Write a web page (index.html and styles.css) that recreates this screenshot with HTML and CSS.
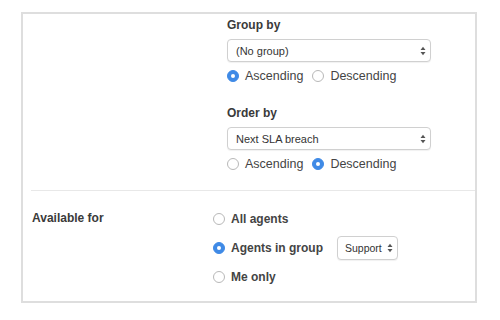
FILE: index.html
```html
<!DOCTYPE html>
<html>
<head>
<meta charset="utf-8">
<link rel="stylesheet" href="styles.css">
</head>
<body>
<div class="panel">
  <section class="sorting">
    <div class="field">
      <div class="field-label">Group by</div>
      <div class="select select-wide">
        <span>(No group)</span>
        <svg class="arrows" width="6" height="10" viewBox="0 0 6 10"><path d="M0.5 4 L3 0.8 L5.5 4 Z M0.5 6 L3 9.2 L5.5 6 Z" fill="#555"/></svg>
      </div>
      <div class="radios">
        <label class="radio"><span class="dot checked"></span>Ascending</label>
        <label class="radio"><span class="dot"></span>Descending</label>
      </div>
    </div>
    <div class="field field-second">
      <div class="field-label">Order by</div>
      <div class="select select-wide">
        <span>Next SLA breach</span>
        <svg class="arrows" width="6" height="10" viewBox="0 0 6 10"><path d="M0.5 4 L3 0.8 L5.5 4 Z M0.5 6 L3 9.2 L5.5 6 Z" fill="#555"/></svg>
      </div>
      <div class="radios">
        <label class="radio"><span class="dot"></span>Ascending</label>
        <label class="radio"><span class="dot checked"></span>Descending</label>
      </div>
    </div>
  </section>
  <div class="divider"></div>
  <section class="avail">
    <div class="avail-label">Available for</div>
    <div class="options">
      <div class="option"><span class="dot"></span>All agents</div>
      <div class="option"><span class="dot checked"></span>Agents in group
        <div class="select select-small">
          <span>Support</span>
          <svg class="arrows" width="6" height="10" viewBox="0 0 6 10"><path d="M0.5 4 L3 0.8 L5.5 4 Z M0.5 6 L3 9.2 L5.5 6 Z" fill="#555"/></svg>
        </div>
      </div>
      <div class="option"><span class="dot"></span>Me only</div>
    </div>
  </section>
</div>
</body>
</html>
```

FILE: styles.css
```css
* { box-sizing: border-box; }
html, body { margin: 0; padding: 0; background: #fff; }
body {
  font-family: "Liberation Sans", Arial, sans-serif;
  color: #333;
}
.panel {
  margin: 12px 0 0 21px;
  width: 456px;
  border: 2px solid #dedede;
  padding: 3px 0 10px 0;
}
.sorting {
  margin-left: 204px;
  width: 204px;
}
.field-second { margin-top: 21px; }
.field-label {
  font-size: 12px;
  font-weight: bold;
  line-height: 16px;
  color: #3a3a3a;
}
.select {
  display: flex;
  align-items: center;
  justify-content: space-between;
  background: #fff;
  border: 1px solid #d0d0d0;
  border-radius: 4px;
  box-shadow: 0 1px 1px rgba(0,0,0,0.06);
  font-size: 11px;
  font-weight: normal;
  color: #333;
  padding: 0 4px 0 8px;
}
.select-wide {
  margin-top: 6px;
  height: 23px;
  width: 204px;
}
.select-small {
  margin-left: 14px;
  height: 24px;
  width: 61px;
  padding: 0 4px 0 7px;
  font-size: 10.5px;
}
.arrows { display: block; flex: none; }
.radios {
  display: flex;
  align-items: center;
  margin-top: 6px;
  height: 16px;
  font-size: 12.5px;
  color: #444;
}
.radio {
  display: flex;
  align-items: center;
  margin-right: 9px;
}
.dot {
  flex: none;
  width: 12px;
  height: 12px;
  border-radius: 50%;
  border: 1px solid #b8b8b8;
  background: #fff;
  margin-right: 6px;
  position: relative;
}
.dot.checked {
  border-color: #3f8ae6;
  background: #3f8ae6;
}
.dot.checked::after {
  content: "";
  position: absolute;
  left: 3px;
  top: 3px;
  width: 4px;
  height: 4px;
  border-radius: 50%;
  background: #fff;
}
.divider {
  margin: 18px 0 0 8px;
  height: 1px;
  background: #e8e8e8;
}
.avail {
  display: grid;
  grid-template-columns: 181px 1fr;
  margin-top: 13px;
  padding-left: 9px;
}
.avail-label {
  font-size: 12px;
  font-weight: bold;
  line-height: 29px;
  color: #3a3a3a;
}
.option {
  display: flex;
  align-items: center;
  height: 29px;
  font-size: 12px;
  font-weight: bold;
  color: #444;
}
.option .dot { margin-right: 6px; }
```
